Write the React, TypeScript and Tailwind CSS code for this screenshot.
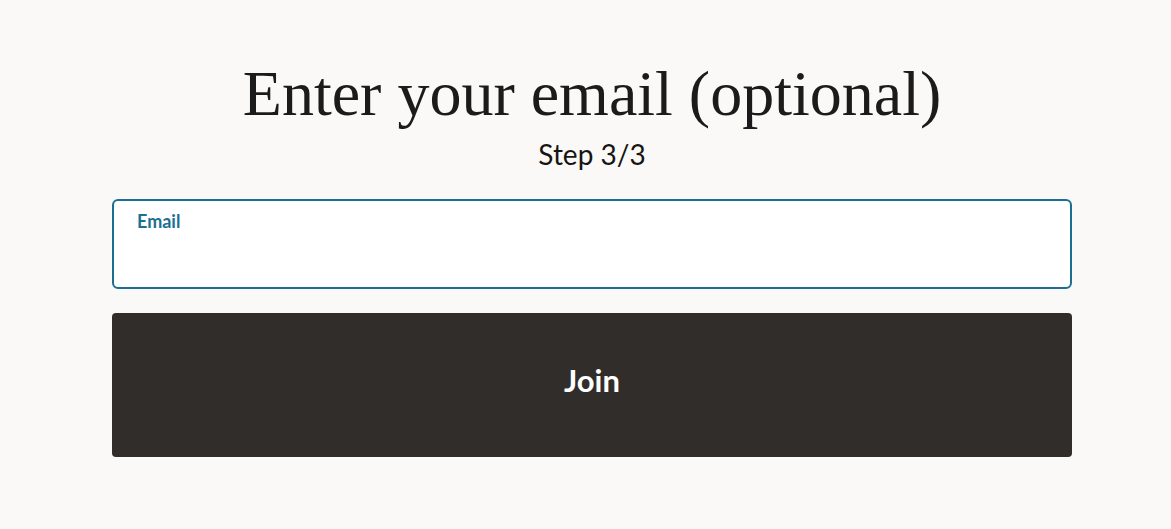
import React, { useState } from 'react';

const App: React.FC = () => {
  const [email, setEmail] = useState('');

  return (
    <div className="min-h-[529px] w-full bg-[#faf9f7] flex flex-col items-center pt-[57px] pl-[13px]">
      <h1
        className="text-[64px] leading-[74px] text-[#1b1b1b] font-normal"
        style={{ fontFamily: '"Liberation Serif", "DejaVu Serif", serif' }}
      >
        Enter your email (optional)
      </h1>
      <p
        className="mt-[6px] text-[28px] leading-[34px] text-[#161513]"
        style={{ fontFamily: 'Lato, "Open Sans", sans-serif' }}
      >
        Step 3/3
      </p>

      <div className="w-[960px] mt-[28px] flex flex-col gap-[24px]" style={{ fontFamily: 'Lato, "Open Sans", sans-serif' }}>
        <label className="block h-[90px] bg-white border-2 border-[#1b6f93] rounded-[6px] px-[23px] pt-[8px]">
          <span className="block text-[18px] leading-[24px] font-bold text-[#1b6f93]">Email</span>
          <input
            type="email"
            value={email}
            onChange={e => setEmail(e.target.value)}
            className="w-full mt-[4px] text-[18px] text-[#161513] bg-transparent outline-none"
          />
        </label>

        <button className="h-[144px] w-full rounded-[4px] bg-[#312d2a] text-white text-[31px] leading-[40px] font-bold pb-[10px]">
          Join
        </button>
      </div>
    </div>
  );
};

export default App;
